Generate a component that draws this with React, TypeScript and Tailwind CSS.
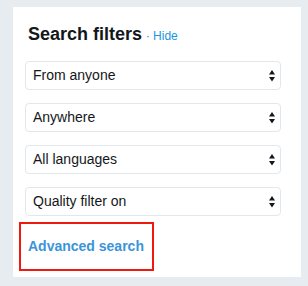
import React from "react";

const filters = ["From anyone", "Anywhere", "All languages", "Quality filter on"];

function Arrows() {
  return (
    <svg width="6" height="12" viewBox="0 0 6 12" className="shrink-0">
      <path d="M3 0 L6 4.5 L0 4.5 Z" fill="#14171a" />
      <path d="M0 7 L6 7 L3 11.5 Z" fill="#14171a" />
    </svg>
  );
}

export default function App() {
  return (
    <div
      className="w-[308px] h-[286px] bg-[#e6ecf0] pt-[7px] pl-[13px]"
      style={{ fontFamily: '"Liberation Sans", Arial, sans-serif' }}
    >
      <div className="w-[288px] bg-white pt-[15px] pb-[6px] pl-[12px]">
        {/* header */}
        <div className="flex items-baseline pl-[3px] h-[24px] leading-[24px]">
          <span className="text-[18px] font-bold text-[#14171a]">Search filters</span>
          <span className="text-[12px] text-[#657786] ml-[4px]">·</span>
          <a className="text-[12px] text-[#1b95e0] ml-[3px]">Hide</a>
        </div>

        {/* selects */}
        <div className="flex flex-col gap-[13px] mt-[15px]">
          {filters.map((f) => (
            <div
              key={f}
              className="w-[256px] h-[29px] flex items-center justify-between rounded-[4px] border border-[#e1e8ed] pl-[7px] pr-[5px] text-[14px] text-[#14171a]"
            >
              <span>{f}</span>
              <Arrows />
            </div>
          ))}
        </div>

        {/* advanced search */}
        <div className="mt-[6px] -ml-[6px] w-[135px] h-[49px] border-2 border-[#f0190f] flex items-center pl-[7px]">
          <a className="text-[14px] font-bold text-[#3b94d9]">Advanced search</a>
        </div>
      </div>
    </div>
  );
}
